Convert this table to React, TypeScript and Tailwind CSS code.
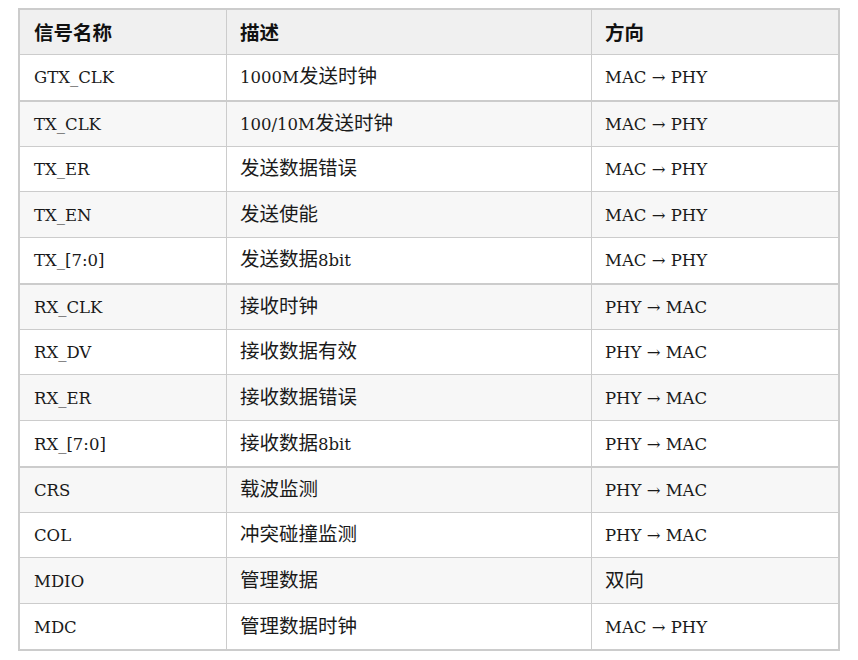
const rows: { name: string; desc: string; dir: string; group?: boolean }[] = [
  { name: 'GTX_CLK', desc: '1000M发送时钟', dir: 'MAC → PHY' },
  { name: 'TX_CLK', desc: '100/10M发送时钟', dir: 'MAC → PHY', group: true },
  { name: 'TX_ER', desc: '发送数据错误', dir: 'MAC → PHY' },
  { name: 'TX_EN', desc: '发送使能', dir: 'MAC → PHY' },
  { name: 'TX_[7:0]', desc: '发送数据8bit', dir: 'MAC → PHY' },
  { name: 'RX_CLK', desc: '接收时钟', dir: 'PHY → MAC', group: true },
  { name: 'RX_DV', desc: '接收数据有效', dir: 'PHY → MAC' },
  { name: 'RX_ER', desc: '接收数据错误', dir: 'PHY → MAC' },
  { name: 'RX_[7:0]', desc: '接收数据8bit', dir: 'PHY → MAC' },
  { name: 'CRS', desc: '载波监测', dir: 'PHY → MAC', group: true },
  { name: 'COL', desc: '冲突碰撞监测', dir: 'PHY → MAC' },
  { name: 'MDIO', desc: '管理数据', dir: '双向' },
  { name: 'MDC', desc: '管理数据时钟', dir: 'MAC → PHY' },
];

// CJK runs are set a little larger than the serif latin text
function Mixed({ text }: { text: string }) {
  const parts = text.split(/([\u4e00-\u9fff]+)/).filter(Boolean);
  return (
    <span className="block whitespace-nowrap leading-[26px] pt-[2px]">
      {parts.map((p, i) =>
        /[\u4e00-\u9fff]/.test(p) ? (
          <span key={i} className="text-[19.5px] leading-none font-['Noto_Sans_CJK_SC',sans-serif]">
            {p}
          </span>
        ) : (
          <span key={i}>{p}</span>
        )
      )}
    </span>
  );
}

export default function App() {
  return (
    <div className="min-h-screen bg-white pl-[18px] pt-[8px] text-[#1a1a1a] font-['DejaVu_Serif','Noto_Sans_CJK_SC',serif] text-[16.5px]">
      <div className="w-[822px] border-2 border-[#cccccc]">
        <div className="grid grid-cols-[207px_365px_246px] h-[44px] bg-[#f0f0f0] font-bold text-[19.5px] font-['Noto_Sans_CJK_SC',sans-serif] text-[#111]">
          <div className="flex items-center pl-[14px] border-r border-[#cccccc]">信号名称</div>
          <div className="flex items-center pl-[13px] border-r border-[#cccccc]">描述</div>
          <div className="flex items-center pl-[13px]">方向</div>
        </div>
        {rows.map((r, i) => (
          <div
            key={r.name}
            className={`grid grid-cols-[207px_365px_246px] h-[45.77px] border-[#cccccc] ${
              r.group ? 'border-t-2' : 'border-t'
            } ${i % 2 === 1 ? 'bg-[#f7f7f7]' : 'bg-white'}`}
          >
            <div className="flex items-center pl-[14px] border-r border-[#cccccc]">
              <Mixed text={r.name} />
            </div>
            <div className="flex items-center pl-[13px] border-r border-[#cccccc]">
              <Mixed text={r.desc} />
            </div>
            <div className="flex items-center pl-[13px]">
              <Mixed text={r.dir} />
            </div>
          </div>
        ))}
      </div>
    </div>
  );
}
